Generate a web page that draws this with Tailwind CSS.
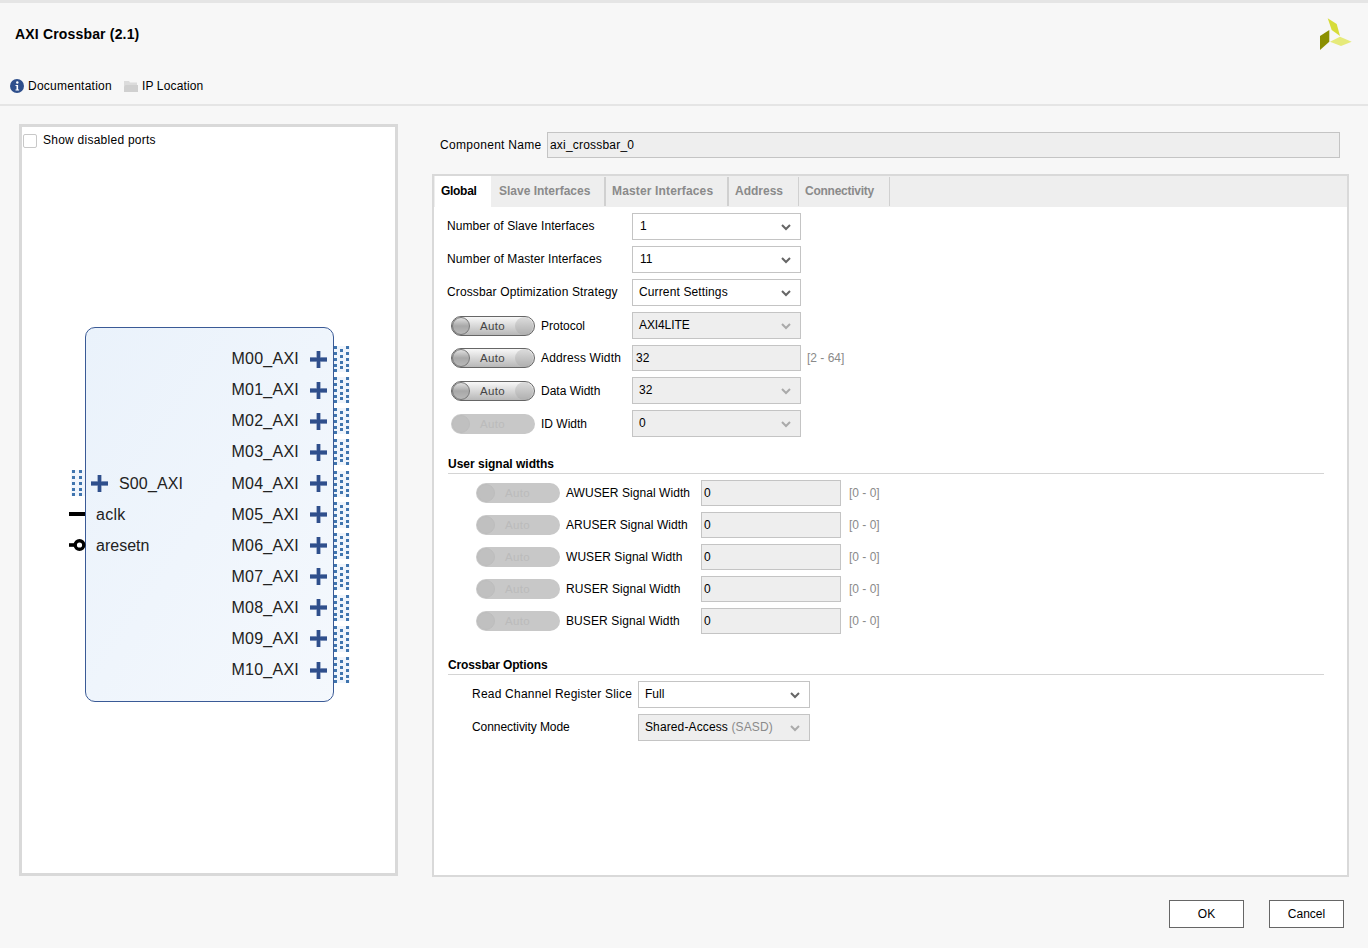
<!doctype html>
<html>
<head>
<meta charset="utf-8">
<script src="https://cdn.jsdelivr.net/npm/@tailwindcss/browser@4"></script>
</head>
<body class="m-0 bg-[#f7f7f7]">
<div class="w-[1368px] h-[948px] overflow-hidden flex flex-col bg-[#f7f7f7] text-black font-['Liberation_Sans',Arial,sans-serif] text-[12px] leading-[14px] border-t-[3px] border-[#e5e5e5]">
  <header class="h-[103px] shrink-0 border-b-2 border-[#e5e5e5] relative">
    <div class="pl-[15px] pt-[23px] text-[14px] leading-[16px] font-bold tracking-[0.17px]">AXI Crossbar (2.1)</div>
    <div class="flex items-center pl-[10px] pt-[37px]">
      <svg class="w-[14px] h-[14px] mr-[4px]" viewBox="0 0 14 14"><circle cx="7" cy="7" r="7" fill="#2f4f8c"/><circle cx="7.3" cy="3.500" r="1.200" fill="#fff"/><path d="M5.500 6h2.600v4.600h1v.9H5.500v-.9h1V6.900h-1z" fill="#fff"/></svg>
      <span class="tracking-[0.25px]">Documentation</span>
      <svg class="w-[14px] h-[12px] ml-[12px] mr-[4px]" viewBox="0 0 14 12"><path d="M0 1h5l1 1.500h7V5H2L0 10z" fill="#dcdcdc"/><path d="M1.500 5H14V12H0V7z" fill="#d0d0d0"/></svg>
      <span class="tracking-[0.15px]">IP Location</span>
    </div>
    <svg class="absolute left-[1319px] top-[15px] w-[33px] h-[33px]" viewBox="0 0 33 33"><path d="M8.700.3 17.700 6 21 18 12.700 12z" fill="#d7dc3a"/><path d="M1 18 10.300 12V23.700L1 32z" fill="#8a8f00"/><path d="M11 23.700 21 18.700 32.700 23.700 22 28z" fill="#e6ea7a"/></svg>
  </header>

  <main class="flex-1 flex relative pt-[18px] pl-[19px]">
    <section class="w-[379px] h-[752px] border-[3px] border-[#d9d9d9] bg-white relative shrink-0">
      <label class="flex items-center pl-[1px] pt-[5px] h-[21px]">
        <span class="w-[14px] h-[14px] border border-[#c8c8c8] rounded-[2px] bg-white mr-[6px] mt-[1px]"></span>
        <span class="tracking-[0.25px]">Show disabled ports</span>
      </label>

      <div class="absolute left-[63px] top-[200px] w-[249px] h-[375px] border border-[#3a5a96] rounded-[10px] bg-gradient-to-br from-[#eaf2fb] to-[#f4f8fd] text-[16px] leading-[20px] text-[#222]">
        <div class="absolute right-[-17px] top-[15.600px] flex flex-col items-end">
          <div class="h-[31.100px] flex items-center tracking-[0.25px]"><span>M00_AXI</span><svg class="w-[17px] h-[17px] ml-[11px]" viewBox="0 0 17 17"><path d="M0 6h17v5H0zM6 0h5v17H6z" fill="#c3cfe3"/><path d="M0 6.500h17v4H0zM6.800 0h3.400v17H6.800z" fill="#2f4f8c"/></svg><svg class="w-[16px] h-[26px] ml-[7px]" viewBox="0 0 16 26"><rect width="16" height="26" fill="#f0f5fc"/><path d="M0 0h3v3H0zM0 6h3v3H0zM0 12h3v3H0zM0 18h3v3H0zM0 23h3v3H0zM12 0h3v3h-3zM12 6h3v3h-3zM12 12h3v3h-3zM12 18h3v3h-3zM12 23h3v3h-3zM6 3h3v3H6zM6 9h3v3H6zM6 15h3v3H6zM6 20h3v3H6z" fill="#3f74ae"/></svg></div>
          <div class="h-[31.100px] flex items-center tracking-[0.25px]"><span>M01_AXI</span><svg class="w-[17px] h-[17px] ml-[11px]" viewBox="0 0 17 17"><path d="M0 6h17v5H0zM6 0h5v17H6z" fill="#c3cfe3"/><path d="M0 6.500h17v4H0zM6.800 0h3.400v17H6.800z" fill="#2f4f8c"/></svg><svg class="w-[16px] h-[26px] ml-[7px]" viewBox="0 0 16 26"><rect width="16" height="26" fill="#f0f5fc"/><path d="M0 0h3v3H0zM0 6h3v3H0zM0 12h3v3H0zM0 18h3v3H0zM0 23h3v3H0zM12 0h3v3h-3zM12 6h3v3h-3zM12 12h3v3h-3zM12 18h3v3h-3zM12 23h3v3h-3zM6 3h3v3H6zM6 9h3v3H6zM6 15h3v3H6zM6 20h3v3H6z" fill="#3f74ae"/></svg></div>
          <div class="h-[31.100px] flex items-center tracking-[0.25px]"><span>M02_AXI</span><svg class="w-[17px] h-[17px] ml-[11px]" viewBox="0 0 17 17"><path d="M0 6h17v5H0zM6 0h5v17H6z" fill="#c3cfe3"/><path d="M0 6.500h17v4H0zM6.800 0h3.400v17H6.800z" fill="#2f4f8c"/></svg><svg class="w-[16px] h-[26px] ml-[7px]" viewBox="0 0 16 26"><rect width="16" height="26" fill="#f0f5fc"/><path d="M0 0h3v3H0zM0 6h3v3H0zM0 12h3v3H0zM0 18h3v3H0zM0 23h3v3H0zM12 0h3v3h-3zM12 6h3v3h-3zM12 12h3v3h-3zM12 18h3v3h-3zM12 23h3v3h-3zM6 3h3v3H6zM6 9h3v3H6zM6 15h3v3H6zM6 20h3v3H6z" fill="#3f74ae"/></svg></div>
          <div class="h-[31.100px] flex items-center tracking-[0.25px]"><span>M03_AXI</span><svg class="w-[17px] h-[17px] ml-[11px]" viewBox="0 0 17 17"><path d="M0 6h17v5H0zM6 0h5v17H6z" fill="#c3cfe3"/><path d="M0 6.500h17v4H0zM6.800 0h3.400v17H6.800z" fill="#2f4f8c"/></svg><svg class="w-[16px] h-[26px] ml-[7px]" viewBox="0 0 16 26"><rect width="16" height="26" fill="#f0f5fc"/><path d="M0 0h3v3H0zM0 6h3v3H0zM0 12h3v3H0zM0 18h3v3H0zM0 23h3v3H0zM12 0h3v3h-3zM12 6h3v3h-3zM12 12h3v3h-3zM12 18h3v3h-3zM12 23h3v3h-3zM6 3h3v3H6zM6 9h3v3H6zM6 15h3v3H6zM6 20h3v3H6z" fill="#3f74ae"/></svg></div>
          <div class="h-[31.100px] flex items-center tracking-[0.25px]"><span>M04_AXI</span><svg class="w-[17px] h-[17px] ml-[11px]" viewBox="0 0 17 17"><path d="M0 6h17v5H0zM6 0h5v17H6z" fill="#c3cfe3"/><path d="M0 6.500h17v4H0zM6.800 0h3.400v17H6.800z" fill="#2f4f8c"/></svg><svg class="w-[16px] h-[26px] ml-[7px]" viewBox="0 0 16 26"><rect width="16" height="26" fill="#f0f5fc"/><path d="M0 0h3v3H0zM0 6h3v3H0zM0 12h3v3H0zM0 18h3v3H0zM0 23h3v3H0zM12 0h3v3h-3zM12 6h3v3h-3zM12 12h3v3h-3zM12 18h3v3h-3zM12 23h3v3h-3zM6 3h3v3H6zM6 9h3v3H6zM6 15h3v3H6zM6 20h3v3H6z" fill="#3f74ae"/></svg></div>
          <div class="h-[31.100px] flex items-center tracking-[0.25px]"><span>M05_AXI</span><svg class="w-[17px] h-[17px] ml-[11px]" viewBox="0 0 17 17"><path d="M0 6h17v5H0zM6 0h5v17H6z" fill="#c3cfe3"/><path d="M0 6.500h17v4H0zM6.800 0h3.400v17H6.800z" fill="#2f4f8c"/></svg><svg class="w-[16px] h-[26px] ml-[7px]" viewBox="0 0 16 26"><rect width="16" height="26" fill="#f0f5fc"/><path d="M0 0h3v3H0zM0 6h3v3H0zM0 12h3v3H0zM0 18h3v3H0zM0 23h3v3H0zM12 0h3v3h-3zM12 6h3v3h-3zM12 12h3v3h-3zM12 18h3v3h-3zM12 23h3v3h-3zM6 3h3v3H6zM6 9h3v3H6zM6 15h3v3H6zM6 20h3v3H6z" fill="#3f74ae"/></svg></div>
          <div class="h-[31.100px] flex items-center tracking-[0.25px]"><span>M06_AXI</span><svg class="w-[17px] h-[17px] ml-[11px]" viewBox="0 0 17 17"><path d="M0 6h17v5H0zM6 0h5v17H6z" fill="#c3cfe3"/><path d="M0 6.500h17v4H0zM6.800 0h3.400v17H6.800z" fill="#2f4f8c"/></svg><svg class="w-[16px] h-[26px] ml-[7px]" viewBox="0 0 16 26"><rect width="16" height="26" fill="#f0f5fc"/><path d="M0 0h3v3H0zM0 6h3v3H0zM0 12h3v3H0zM0 18h3v3H0zM0 23h3v3H0zM12 0h3v3h-3zM12 6h3v3h-3zM12 12h3v3h-3zM12 18h3v3h-3zM12 23h3v3h-3zM6 3h3v3H6zM6 9h3v3H6zM6 15h3v3H6zM6 20h3v3H6z" fill="#3f74ae"/></svg></div>
          <div class="h-[31.100px] flex items-center tracking-[0.25px]"><span>M07_AXI</span><svg class="w-[17px] h-[17px] ml-[11px]" viewBox="0 0 17 17"><path d="M0 6h17v5H0zM6 0h5v17H6z" fill="#c3cfe3"/><path d="M0 6.500h17v4H0zM6.800 0h3.400v17H6.800z" fill="#2f4f8c"/></svg><svg class="w-[16px] h-[26px] ml-[7px]" viewBox="0 0 16 26"><rect width="16" height="26" fill="#f0f5fc"/><path d="M0 0h3v3H0zM0 6h3v3H0zM0 12h3v3H0zM0 18h3v3H0zM0 23h3v3H0zM12 0h3v3h-3zM12 6h3v3h-3zM12 12h3v3h-3zM12 18h3v3h-3zM12 23h3v3h-3zM6 3h3v3H6zM6 9h3v3H6zM6 15h3v3H6zM6 20h3v3H6z" fill="#3f74ae"/></svg></div>
          <div class="h-[31.100px] flex items-center tracking-[0.25px]"><span>M08_AXI</span><svg class="w-[17px] h-[17px] ml-[11px]" viewBox="0 0 17 17"><path d="M0 6h17v5H0zM6 0h5v17H6z" fill="#c3cfe3"/><path d="M0 6.500h17v4H0zM6.800 0h3.400v17H6.800z" fill="#2f4f8c"/></svg><svg class="w-[16px] h-[26px] ml-[7px]" viewBox="0 0 16 26"><rect width="16" height="26" fill="#f0f5fc"/><path d="M0 0h3v3H0zM0 6h3v3H0zM0 12h3v3H0zM0 18h3v3H0zM0 23h3v3H0zM12 0h3v3h-3zM12 6h3v3h-3zM12 12h3v3h-3zM12 18h3v3h-3zM12 23h3v3h-3zM6 3h3v3H6zM6 9h3v3H6zM6 15h3v3H6zM6 20h3v3H6z" fill="#3f74ae"/></svg></div>
          <div class="h-[31.100px] flex items-center tracking-[0.25px]"><span>M09_AXI</span><svg class="w-[17px] h-[17px] ml-[11px]" viewBox="0 0 17 17"><path d="M0 6h17v5H0zM6 0h5v17H6z" fill="#c3cfe3"/><path d="M0 6.500h17v4H0zM6.800 0h3.400v17H6.800z" fill="#2f4f8c"/></svg><svg class="w-[16px] h-[26px] ml-[7px]" viewBox="0 0 16 26"><rect width="16" height="26" fill="#f0f5fc"/><path d="M0 0h3v3H0zM0 6h3v3H0zM0 12h3v3H0zM0 18h3v3H0zM0 23h3v3H0zM12 0h3v3h-3zM12 6h3v3h-3zM12 12h3v3h-3zM12 18h3v3h-3zM12 23h3v3h-3zM6 3h3v3H6zM6 9h3v3H6zM6 15h3v3H6zM6 20h3v3H6z" fill="#3f74ae"/></svg></div>
          <div class="h-[31.100px] flex items-center tracking-[0.25px]"><span>M10_AXI</span><svg class="w-[17px] h-[17px] ml-[11px]" viewBox="0 0 17 17"><path d="M0 6h17v5H0zM6 0h5v17H6z" fill="#c3cfe3"/><path d="M0 6.500h17v4H0zM6.800 0h3.400v17H6.800z" fill="#2f4f8c"/></svg><svg class="w-[16px] h-[26px] ml-[7px]" viewBox="0 0 16 26"><rect width="16" height="26" fill="#f0f5fc"/><path d="M0 0h3v3H0zM0 6h3v3H0zM0 12h3v3H0zM0 18h3v3H0zM0 23h3v3H0zM12 0h3v3h-3zM12 6h3v3h-3zM12 12h3v3h-3zM12 18h3v3h-3zM12 23h3v3h-3zM6 3h3v3H6zM6 9h3v3H6zM6 15h3v3H6zM6 20h3v3H6z" fill="#3f74ae"/></svg></div>
        </div>
        <div class="absolute left-[5px] top-[140px] w-[150px]">
          <div class="h-[31px] flex items-center tracking-[0.15px]"><svg class="w-[17px] h-[17px] mr-[11px]" viewBox="0 0 17 17"><path d="M0 6h17v5H0zM6 0h5v17H6z" fill="#c3cfe3"/><path d="M0 6.500h17v4H0zM6.800 0h3.400v17H6.800z" fill="#2f4f8c"/></svg><span>S00_AXI</span></div>
          <div class="h-[31px] flex items-center pl-[5px] tracking-[0.25px]">aclk</div>
          <div class="h-[31px] flex items-center pl-[5px]">aresetn</div>
        </div>
        <svg class="absolute left-[-15px] top-[142px] w-[14px] h-[26px]" viewBox="0 0 14 26"><rect width="14" height="26" fill="#f0f5fc"/><path d="M1 0h3v3H1zM1 6h3v3H1zM1 12h3v3H1zM1 18h3v3H1zM1 23h3v3H1zM8 0h3v3H8zM8 6h3v3H8zM8 12h3v3H8zM8 18h3v3H8zM8 23h3v3H8z" fill="#3f74ae"/></svg>
        <span class="absolute left-[-17px] top-[184px] w-[16px] h-[3.500px] bg-black"></span>
        <svg class="absolute left-[-17px] top-[210px] w-[18px] h-[14px]" viewBox="0 0 18 14"><rect x="0" y="5.200" width="7" height="3.600" fill="#000"/><circle cx="10.500" cy="7" r="4.300" fill="#fff" stroke="#000" stroke-width="3.400"/></svg>
      </div>
    </section>

    <section class="ml-[34px] w-[917px]">
      <div class="flex items-center h-[26px] pl-[8px] mt-[8px] mr-[9px]">
        <span class="w-[107px] tracking-[0.3px]">Component Name</span>
        <div class="flex-1 h-[26px] border border-[#c4c4c4] bg-[#eeeeee] pl-[2px] flex items-center tracking-[0.2px]">axi_crossbar_0</div>
      </div>
      <div class="mt-[16px] h-[703px] border-2 border-[#d9d9d9] bg-white flex flex-col">
        <nav class="flex h-[31px] bg-[#eeeeee] font-bold text-[#8a8a8a] shrink-0">
          <span class="w-[56px] ml-[1px] bg-white text-black flex items-center pl-[6px] pb-[2px] tracking-[-0.3px]">Global</span>
          <span class="w-[115px] flex items-center pl-[8px] pb-[2px] border-r-2 border-[#d0d0d0] my-[1px]">Slave Interfaces</span>
          <span class="w-[123px] flex items-center pl-[6px] pb-[2px] border-r-2 border-[#d0d0d0] my-[1px] tracking-[0.15px]">Master Interfaces</span>
          <span class="w-[70px] flex items-center pl-[6px] pb-[2px] border-r border-[#d0d0d0] my-[1px]">Address</span>
          <span class="w-[91px] flex items-center pl-[6px] pb-[2px] border-r border-[#d0d0d0] my-[1px] tracking-[-0.25px]">Connectivity</span>
        </nav>
        <div class="pl-[13px] pr-[23px] pt-[6px]">
          <div class="flex items-center h-[27px]"><span class="w-[185px] pb-[2px] tracking-[0.08px]">Number of Slave Interfaces</span><div class="w-[169px] h-full border border-[#c4c4c4] bg-white flex items-center pl-[7px] pb-[2px] relative">1<svg class="absolute right-[9px] top-[10px] w-[10px] h-[7px]" viewBox="0 0 10 7"><path d="M1 1l4 4 4-4" fill="none" stroke="#666" stroke-width="2"/></svg></div></div>
          <div class="flex items-center h-[27px] mt-[6px]"><span class="w-[185px] pb-[2px] tracking-[0.1px]">Number of Master Interfaces</span><div class="w-[169px] h-full border border-[#c4c4c4] bg-white flex items-center pl-[7px] pb-[2px] relative">11<svg class="absolute right-[9px] top-[10px] w-[10px] h-[7px]" viewBox="0 0 10 7"><path d="M1 1l4 4 4-4" fill="none" stroke="#666" stroke-width="2"/></svg></div></div>
          <div class="flex items-center h-[27px] mt-[6px]"><span class="w-[185px] pb-[2px] tracking-[0.13px]">Crossbar Optimization Strategy</span><div class="w-[169px] h-full border border-[#c4c4c4] bg-white flex items-center pl-[6px] pb-[2px] relative tracking-[0.13px]">Current Settings<svg class="absolute right-[9px] top-[10px] w-[10px] h-[7px]" viewBox="0 0 10 7"><path d="M1 1l4 4 4-4" fill="none" stroke="#666" stroke-width="2"/></svg></div></div>

          <div class="flex items-center h-[27px] mt-[6px]">
            <span class="w-[84px] h-[20px] ml-[4px] mr-[6px] rounded-full border border-[#666] bg-gradient-to-b from-[#f8f8f8] to-[#b8b8b8] flex items-center relative text-[11.500px] tracking-[0.3px] text-[#444]"><span class="w-[18px] h-[18px] rounded-full border border-[#777] bg-gradient-to-b from-[#e0e0e0] via-[#a8a8a8] to-[#b8b8b8]"></span><span class="absolute right-[1px] w-[18px] h-[18px] rounded-full bg-[#9a9a9a]/30"></span><span class="absolute left-[28px]">Auto</span></span>
            <span class="w-[91px]">Protocol</span>
            <div class="w-[169px] h-full border border-[#c4c4c4] bg-[#eeeeee] flex items-center pl-[6px] pb-[2px] relative tracking-[-0.1px]">AXI4LITE<svg class="absolute right-[9px] top-[10px] w-[10px] h-[7px]" viewBox="0 0 10 7"><path d="M1 1l4 4 4-4" fill="none" stroke="#aaa" stroke-width="2"/></svg></div>
          </div>
          <div class="flex items-center h-[26px] mt-[6px]">
            <span class="w-[84px] h-[20px] ml-[4px] mr-[6px] rounded-full border border-[#666] bg-gradient-to-b from-[#f8f8f8] to-[#b8b8b8] flex items-center relative text-[11.500px] tracking-[0.3px] text-[#444]"><span class="w-[18px] h-[18px] rounded-full border border-[#777] bg-gradient-to-b from-[#e0e0e0] via-[#a8a8a8] to-[#b8b8b8]"></span><span class="absolute right-[1px] w-[18px] h-[18px] rounded-full bg-[#9a9a9a]/30"></span><span class="absolute left-[28px]">Auto</span></span>
            <span class="w-[91px] tracking-[0.15px]">Address Width</span>
            <div class="w-[169px] h-full border border-[#c4c4c4] bg-[#eeeeee] flex items-center pl-[3px]">32</div>
            <span class="ml-[6px] text-[#8a8a8a]">[2 - 64]</span>
          </div>
          <div class="flex items-center h-[27px] mt-[6px]">
            <span class="w-[84px] h-[20px] ml-[4px] mr-[6px] rounded-full border border-[#666] bg-gradient-to-b from-[#f8f8f8] to-[#b8b8b8] flex items-center relative text-[11.500px] tracking-[0.3px] text-[#444]"><span class="w-[18px] h-[18px] rounded-full border border-[#777] bg-gradient-to-b from-[#e0e0e0] via-[#a8a8a8] to-[#b8b8b8]"></span><span class="absolute right-[1px] w-[18px] h-[18px] rounded-full bg-[#9a9a9a]/30"></span><span class="absolute left-[28px]">Auto</span></span>
            <span class="w-[91px]">Data Width</span>
            <div class="w-[169px] h-full border border-[#c4c4c4] bg-[#eeeeee] flex items-center pl-[6px] pb-[2px] relative">32<svg class="absolute right-[9px] top-[10px] w-[10px] h-[7px]" viewBox="0 0 10 7"><path d="M1 1l4 4 4-4" fill="none" stroke="#aaa" stroke-width="2"/></svg></div>
          </div>
          <div class="flex items-center h-[27px] mt-[6px]">
            <span class="w-[84px] h-[20px] ml-[4px] mr-[6px] rounded-full bg-[#c8c8c8] flex items-center relative text-[11.500px] tracking-[0.3px] text-[#bbb]"><span class="w-[18px] h-[18px] rounded-full bg-[#c0c0c0] border border-[#bdbdbd] ml-[1px]"></span><span class="absolute left-[29px]">Auto</span></span>
            <span class="w-[91px]">ID Width</span>
            <div class="w-[169px] h-full border border-[#c4c4c4] bg-[#eeeeee] flex items-center pl-[6px] pb-[2px] relative">0<svg class="absolute right-[9px] top-[10px] w-[10px] h-[7px]" viewBox="0 0 10 7"><path d="M1 1l4 4 4-4" fill="none" stroke="#aaa" stroke-width="2"/></svg></div>
          </div>

          <div class="ml-[1px] mt-[20px] h-[17px] border-b border-[#d4d4d4] font-bold">User signal widths</div>
          <div class="flex items-center h-[26px] mt-[6px] pl-[29px]"><span class="w-[84px] h-[20px] mr-[6px] rounded-full bg-[#c8c8c8] flex items-center relative text-[11.500px] tracking-[0.3px] text-[#bbb]"><span class="w-[18px] h-[18px] rounded-full bg-[#c0c0c0] border border-[#bdbdbd] ml-[1px]"></span><span class="absolute left-[29px]">Auto</span></span><span class="w-[135px] tracking-[0.06px]">AWUSER Signal Width</span><div class="w-[140px] h-full border border-[#c4c4c4] bg-[#eeeeee] flex items-center pl-[2px]">0</div><span class="ml-[8px] text-[#8a8a8a]">[0 - 0]</span></div>
          <div class="flex items-center h-[26px] mt-[6px] pl-[29px]"><span class="w-[84px] h-[20px] mr-[6px] rounded-full bg-[#c8c8c8] flex items-center relative text-[11.500px] tracking-[0.3px] text-[#bbb]"><span class="w-[18px] h-[18px] rounded-full bg-[#c0c0c0] border border-[#bdbdbd] ml-[1px]"></span><span class="absolute left-[29px]">Auto</span></span><span class="w-[135px] tracking-[0.06px]">ARUSER Signal Width</span><div class="w-[140px] h-full border border-[#c4c4c4] bg-[#eeeeee] flex items-center pl-[2px]">0</div><span class="ml-[8px] text-[#8a8a8a]">[0 - 0]</span></div>
          <div class="flex items-center h-[26px] mt-[6px] pl-[29px]"><span class="w-[84px] h-[20px] mr-[6px] rounded-full bg-[#c8c8c8] flex items-center relative text-[11.500px] tracking-[0.3px] text-[#bbb]"><span class="w-[18px] h-[18px] rounded-full bg-[#c0c0c0] border border-[#bdbdbd] ml-[1px]"></span><span class="absolute left-[29px]">Auto</span></span><span class="w-[135px] tracking-[0.06px]">WUSER Signal Width</span><div class="w-[140px] h-full border border-[#c4c4c4] bg-[#eeeeee] flex items-center pl-[2px]">0</div><span class="ml-[8px] text-[#8a8a8a]">[0 - 0]</span></div>
          <div class="flex items-center h-[26px] mt-[6px] pl-[29px]"><span class="w-[84px] h-[20px] mr-[6px] rounded-full bg-[#c8c8c8] flex items-center relative text-[11.500px] tracking-[0.3px] text-[#bbb]"><span class="w-[18px] h-[18px] rounded-full bg-[#c0c0c0] border border-[#bdbdbd] ml-[1px]"></span><span class="absolute left-[29px]">Auto</span></span><span class="w-[135px] tracking-[0.1px]">RUSER Signal Width</span><div class="w-[140px] h-full border border-[#c4c4c4] bg-[#eeeeee] flex items-center pl-[2px]">0</div><span class="ml-[8px] text-[#8a8a8a]">[0 - 0]</span></div>
          <div class="flex items-center h-[26px] mt-[6px] pl-[29px]"><span class="w-[84px] h-[20px] mr-[6px] rounded-full bg-[#c8c8c8] flex items-center relative text-[11.500px] tracking-[0.3px] text-[#bbb]"><span class="w-[18px] h-[18px] rounded-full bg-[#c0c0c0] border border-[#bdbdbd] ml-[1px]"></span><span class="absolute left-[29px]">Auto</span></span><span class="w-[135px] tracking-[0.1px]">BUSER Signal Width</span><div class="w-[140px] h-full border border-[#c4c4c4] bg-[#eeeeee] flex items-center pl-[2px]">0</div><span class="ml-[8px] text-[#8a8a8a]">[0 - 0]</span></div>

          <div class="ml-[1px] mt-[24px] h-[17px] border-b border-[#d4d4d4] font-bold tracking-[-0.12px]">Crossbar Options</div>
          <div class="flex items-center h-[27px] mt-[6px] pl-[25px]"><span class="w-[166px] pb-[1px] tracking-[0.22px]">Read Channel Register Slice</span><div class="w-[172px] h-full border border-[#c4c4c4] bg-white flex items-center pl-[6px] pb-[1px] relative">Full<svg class="absolute right-[9px] top-[10px] w-[10px] h-[7px]" viewBox="0 0 10 7"><path d="M1 1l4 4 4-4" fill="none" stroke="#666" stroke-width="2"/></svg></div></div>
          <div class="flex items-center h-[27px] mt-[6px] pl-[25px]"><span class="w-[166px] pb-[1px] tracking-[-0.06px]">Connectivity Mode</span><div class="w-[172px] h-full border border-[#c4c4c4] bg-[#eeeeee] flex items-center pl-[6px] pb-[1px] relative tracking-[0.12px]">Shared-Access&nbsp;<span class="text-[#8a8a8a]">(SASD)</span><svg class="absolute right-[9px] top-[10px] w-[10px] h-[7px]" viewBox="0 0 10 7"><path d="M1 1l4 4 4-4" fill="none" stroke="#aaa" stroke-width="2"/></svg></div></div>
        </div>
      </div>
    </section>

    <div class="absolute right-[24px] bottom-[20px] flex gap-[25px]">
      <button class="w-[75px] h-[28px] border border-[#666] bg-white text-[12px]">OK</button>
      <button class="w-[75px] h-[28px] border border-[#666] bg-white text-[12px]">Cancel</button>
    </div>
  </main>
</div>
</body>
</html>
